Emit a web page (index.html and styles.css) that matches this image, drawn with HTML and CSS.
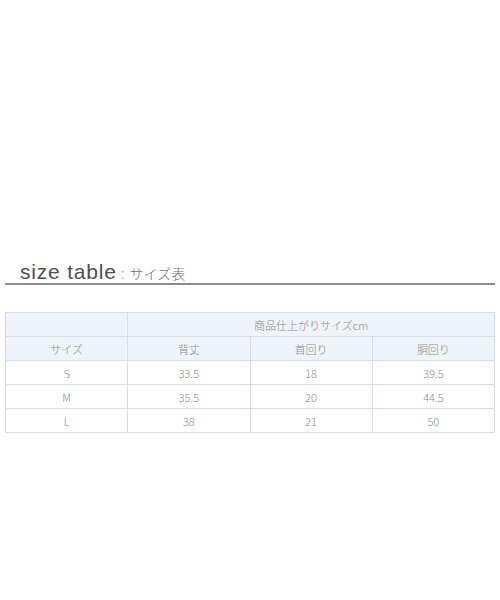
FILE: index.html
```html
<!DOCTYPE html>
<html lang="ja">
<head>
<meta charset="utf-8">
<link rel="stylesheet" href="styles.css">
</head>
<body>
<div class="page">
  <h2 class="title"><span class="en">size table</span><span class="sep">:</span><span class="ja">サイズ表</span></h2>
  <table class="size">
    <colgroup><col><col><col><col></colgroup>
    <tr class="head">
      <td></td>
      <td colspan="3">商品仕上がりサイズcm</td>
    </tr>
    <tr class="head">
      <td>サイズ</td>
      <td>背丈</td>
      <td>首回り</td>
      <td>胴回り</td>
    </tr>
    <tr><td>S</td><td>33.5</td><td>18</td><td>39.5</td></tr>
    <tr><td>M</td><td>35.5</td><td>20</td><td>44.5</td></tr>
    <tr><td>L</td><td>38</td><td>21</td><td>50</td></tr>
  </table>
</div>
</body>
</html>
```

FILE: styles.css
```css
html, body {
  margin: 0;
  padding: 0;
  background: #ffffff;
}
.page {
  padding: 259px 5px 0 5px;
  width: 490px;
}
.title {
  margin: 0;
  padding-left: 15px;
  height: 24px;
  line-height: 24px;
  font-weight: normal;
  border-bottom: 2px solid #8c8c8c;
  color: #555555;
  white-space: nowrap;
}
.en {
  font-family: "Liberation Sans", Arial, sans-serif;
  font-size: 21px;
  letter-spacing: 0.8px;
  color: #505050;
}
.sep {
  font-family: "Liberation Sans", sans-serif;
  font-size: 14px;
  color: #a0a0a0;
  margin: 0 5px 0 4px;
}
.ja {
  font-family: "Noto Sans CJK JP", sans-serif;
  font-size: 14px;
  font-weight: 300;
  color: #707070;
}
.size {
  margin-top: 27px;
  width: 490px;
  border-collapse: collapse;
  table-layout: fixed;
  font-family: "Noto Sans CJK JP", sans-serif;
  font-size: 11px;
  font-weight: 300;
  color: #8a8a8a;
}
.size td {
  border: 1px solid #d6dce6;
  height: 23px;
  padding: 0;
  text-align: center;
  vertical-align: middle;
  line-height: 14px;
}
.size .head td {
  background: #eef3fa;
}
```
